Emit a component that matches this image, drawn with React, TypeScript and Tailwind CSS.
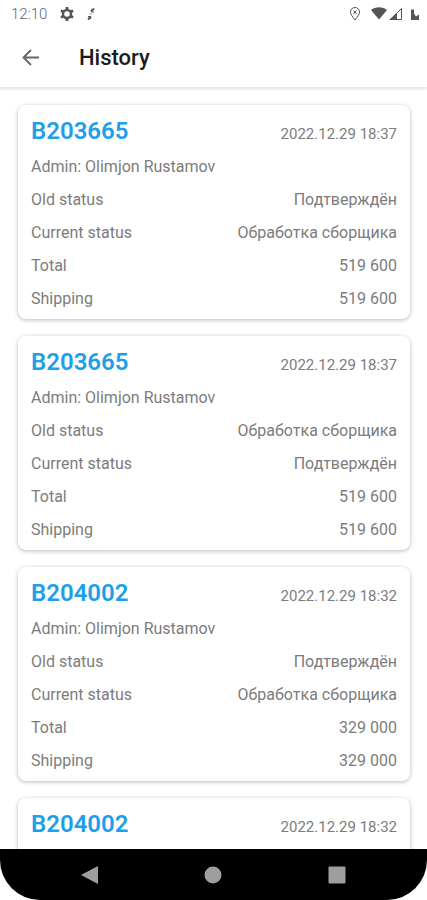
import { useState } from "react";

interface HistoryDetails {
  admin: string;
  oldStatus: string;
  currentStatus: string;
  total: number;
  shipping: number;
}

interface HistoryItem {
  id: number;
  order: string;
  date: string;
  details?: HistoryDetails;
}

const items: HistoryItem[] = [
  {
    id: 1,
    order: "B203665",
    date: "2022.12.29 18:37",
    details: { admin: "Olimjon Rustamov", oldStatus: "Подтверждён", currentStatus: "Обработка сборщика", total: 519600, shipping: 519600 },
  },
  {
    id: 2,
    order: "B203665",
    date: "2022.12.29 18:37",
    details: { admin: "Olimjon Rustamov", oldStatus: "Обработка сборщика", currentStatus: "Подтверждён", total: 519600, shipping: 519600 },
  },
  {
    id: 3,
    order: "B204002",
    date: "2022.12.29 18:32",
    details: { admin: "Olimjon Rustamov", oldStatus: "Подтверждён", currentStatus: "Обработка сборщика", total: 329000, shipping: 329000 },
  },
  { id: 4, order: "B204002", date: "2022.12.29 18:32" },
];

const formatSum = (n: number) => String(n).replace(/\B(?=(\d{3})+$)/g, " ");

function StatusBar() {
  return (
    <div className="flex h-7 shrink-0 items-center justify-between pr-2 pl-[11px] text-[#555555]">
      <div className="flex items-center">
        <span className="w-9 text-[15px] font-light text-[#666666]">12:10</span>
        <svg className="ml-3 h-4 w-4" viewBox="0 0 16 16" fill="none" stroke="currentColor">
          <circle cx="8" cy="8" r="4" strokeWidth="2.4" />
          <path d="M8 1v2.500M8 12.500V15M2 4.500l2 1.200M12 10.300l2 1.200M2 11.500l2-1.200M12 5.700l2-1.200" strokeWidth="2.800" />
        </svg>
        <svg className="ml-2.5 h-4 w-3" viewBox="0 0 12 16" fill="none" stroke="currentColor" strokeWidth="1.800">
          <path d="M6 5.500l3-3M3 13.500l3-3" />
          <path d="M6.500 3.500v2.500H9M3 10.500h2.500V13" strokeWidth="1" />
          <path d="M4.500 8h3" strokeWidth="1" strokeOpacity="0.5" />
        </svg>
      </div>
      <div className="flex items-center">
        <svg className="h-4 w-3" viewBox="0 0 12 16" fill="none" stroke="currentColor">
          <path d="M6 14C3.500 10.700 1.500 8.500 1.500 6a4.500 4.500 0 019 0c0 2.500-2 4.700-4.500 8z" />
          <path d="M4.500 4.500L6 6l1.500-1.500M4.500 8L6 6l1.500 2" />
        </svg>
        <svg className="ml-2.5 h-4 w-4" viewBox="0 0 16 16" fill="currentColor">
          <path d="M0 4C4.500.400 11.500.400 16 4L8 13.500z" />
        </svg>
        <svg className="ml-0.5 h-4 w-3.5" viewBox="0 0 14 16">
          <path d="M0 14L8 6.500V14z" fill="currentColor" />
          <path d="M1.500 13.500L12.500 2.500v11z" fill="none" stroke="currentColor" strokeWidth="1" />
        </svg>
        <svg className="ml-2 h-4 w-2" viewBox="0 0 8 16" fill="currentColor">
          <path d="M0 3.500h3v4l2 3L8 8.500V14H0z" />
        </svg>
      </div>
    </div>
  );
}

function Row({ label, value }: { label: string; value: string }) {
  return (
    <div className="flex h-[33px] items-center justify-between">
      <dt>{label}</dt>
      <dd>{value}</dd>
    </div>
  );
}

function HistoryCard({ item }: { item: HistoryItem }) {
  const { order, date, details } = item;

  return (
    <li className="min-h-[214px] shrink-0 rounded-lg bg-white px-[13px] pb-1 text-base text-[#7c7c7c] shadow-[0_1px_4px_rgba(0,0,0,0.28)]">
      <div className="flex h-[45px] items-end justify-between">
        <h2 className="text-2xl leading-[38px] font-semibold text-[#1e9fec]">{order}</h2>
        <time className="text-[15px] leading-8">{date}</time>
      </div>
      {details && (
        <>
          <p className="flex h-[33px] items-center">Admin: {details.admin}</p>
          <dl>
            <Row label="Old status" value={details.oldStatus} />
            <Row label="Current status" value={details.currentStatus} />
            <Row label="Total" value={formatSum(details.total)} />
            <Row label="Shipping" value={formatSum(details.shipping)} />
          </dl>
        </>
      )}
    </li>
  );
}

export default function App() {
  const [history] = useState<HistoryItem[]>(items);

  return (
    <div className="flex h-screen flex-col overflow-hidden bg-white font-['Roboto',sans-serif]">
      <StatusBar />
      <header className="flex h-[59px] shrink-0 items-center px-[19px] shadow-[0_2px_3px_rgba(0,0,0,0.12)]">
        <button type="button" aria-label="Back" className="text-[#666666]">
          <svg className="h-6 w-6" viewBox="0 0 24 24" fill="none" stroke="currentColor" strokeWidth="1.800">
            <path d="M20 11.500H4.500M12 4l-7.500 7.500L12 19" />
          </svg>
        </button>
        <h1 className="ml-9 text-[22px] font-medium text-[#1c1c1c]">History</h1>
      </header>

      <ul className="flex min-h-0 flex-1 flex-col gap-[17px] overflow-hidden pt-[18px] pr-[17px] pl-[18px]">
        {history.map((item) => (
          <HistoryCard key={item.id} item={item} />
        ))}
      </ul>

      <div className="shrink-0 bg-white">
        <nav className="flex h-[51px] items-center justify-around rounded-b-[40px] bg-black px-7 text-[#9e9e9e]">
          <button type="button" aria-label="Back">
            <svg className="h-5 w-5" viewBox="0 0 20 20" fill="currentColor"><path d="M18 1v18L1 10z" /></svg>
          </button>
          <button type="button" aria-label="Home">
            <svg className="h-5 w-5" viewBox="0 0 20 20" fill="currentColor"><circle cx="10" cy="10" r="8.500" /></svg>
          </button>
          <button type="button" aria-label="Recent apps">
            <svg className="h-5 w-5" viewBox="0 0 20 20" fill="currentColor"><rect x="1.500" y="1.500" width="17" height="17" rx="1" /></svg>
          </button>
        </nav>
      </div>
    </div>
  );
}
